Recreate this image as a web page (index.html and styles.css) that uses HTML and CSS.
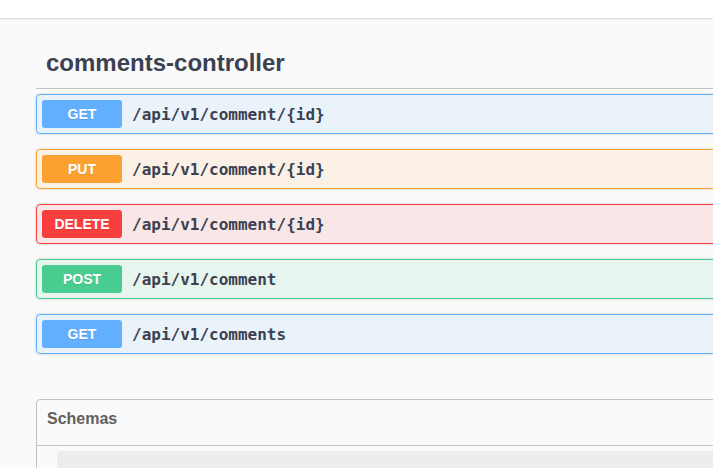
FILE: index.html
```html
<!DOCTYPE html>
<html lang="en">
<head>
<meta charset="utf-8">
<title>comments-controller</title>
<link rel="stylesheet" href="styles.css">
</head>
<body>
<div class="topbar"></div>
<div class="wrapper">
  <section class="tag-section">
    <h3 class="tag">comments-controller</h3>
    <div class="opblock get">
      <div class="summary"><span class="method">GET</span><span class="path">/api/v1/comment/{id}</span></div>
    </div>
    <div class="opblock put">
      <div class="summary"><span class="method">PUT</span><span class="path">/api/v1/comment/{id}</span></div>
    </div>
    <div class="opblock delete">
      <div class="summary"><span class="method">DELETE</span><span class="path">/api/v1/comment/{id}</span></div>
    </div>
    <div class="opblock post">
      <div class="summary"><span class="method">POST</span><span class="path">/api/v1/comment</span></div>
    </div>
    <div class="opblock get">
      <div class="summary"><span class="method">GET</span><span class="path">/api/v1/comments</span></div>
    </div>
  </section>
  <section class="models">
    <h4 class="models-title">Schemas</h4>
    <div class="models-body">
      <div class="model-container"></div>
    </div>
  </section>
</div>
</body>
</html>
```
FILE: styles.css
```css
html, body {
  margin: 0;
  padding: 0;
}
body {
  background: #fafafa;
  font-family: "Liberation Sans", Arial, sans-serif;
  color: #3b4151;
  overflow: hidden;
  width: 713px;
  height: 468px;
}
.topbar {
  height: 18px;
  background: #fff;
  box-shadow: 0 1px 2px rgba(0, 0, 0, 0.15);
  position: relative;
}
.wrapper {
  padding-left: 36px;
  width: 1200px;
}
.tag-section {
  padding-top: 19px;
}
.tag {
  margin: 0 0 5px;
  padding: 10px 20px 10px 10px;
  font-size: 24px;
  line-height: 31px;
  font-weight: bold;
  color: #3b4151;
  border-bottom: 1px solid rgba(59, 65, 81, 0.3);
}
.opblock {
  margin: 0 0 15px;
  border: 1px solid #000;
  border-radius: 4px;
  box-shadow: 0 0 3px rgba(0, 0, 0, 0.19);
}
.summary {
  display: flex;
  align-items: center;
  padding: 5px;
}
.method {
  min-width: 80px;
  padding: 6px 0;
  font-size: 14px;
  line-height: 16px;
  font-weight: bold;
  text-align: center;
  color: #fff;
  border-radius: 3px;
  text-shadow: 0 1px 0 rgba(0, 0, 0, 0.1);
}
.path {
  padding: 0 10px;
  font-family: "DejaVu Sans Mono", monospace;
  font-size: 16px;
  font-weight: bold;
  color: #3b4151;
}
.get { background: rgba(97, 175, 254, 0.1); border-color: #61affe; }
.get .method { background: #61affe; }
.put { background: rgba(252, 161, 48, 0.1); border-color: #fca130; }
.put .method { background: #fca130; }
.delete { background: rgba(249, 62, 62, 0.1); border-color: #f93e3e; }
.delete .method { background: #f93e3e; }
.post { background: rgba(73, 204, 144, 0.1); border-color: #49cc90; }
.post .method { background: #49cc90; }
.models {
  margin: 45px 0 30px;
  border: 1px solid rgba(59, 65, 81, 0.3);
  border-radius: 4px;
}
.models-title {
  margin: 0;
  padding: 10px 20px 17px 10px;
  font-size: 16px;
  line-height: 18px;
  font-weight: bold;
  color: #606060;
  border-bottom: 1px solid rgba(59, 65, 81, 0.3);
}
.models-body {
  padding-top: 5px;
}
.model-container {
  margin: 0 20px 15px;
  height: 60px;
  background: rgba(0, 0, 0, 0.05);
  border-radius: 4px;
}
```
